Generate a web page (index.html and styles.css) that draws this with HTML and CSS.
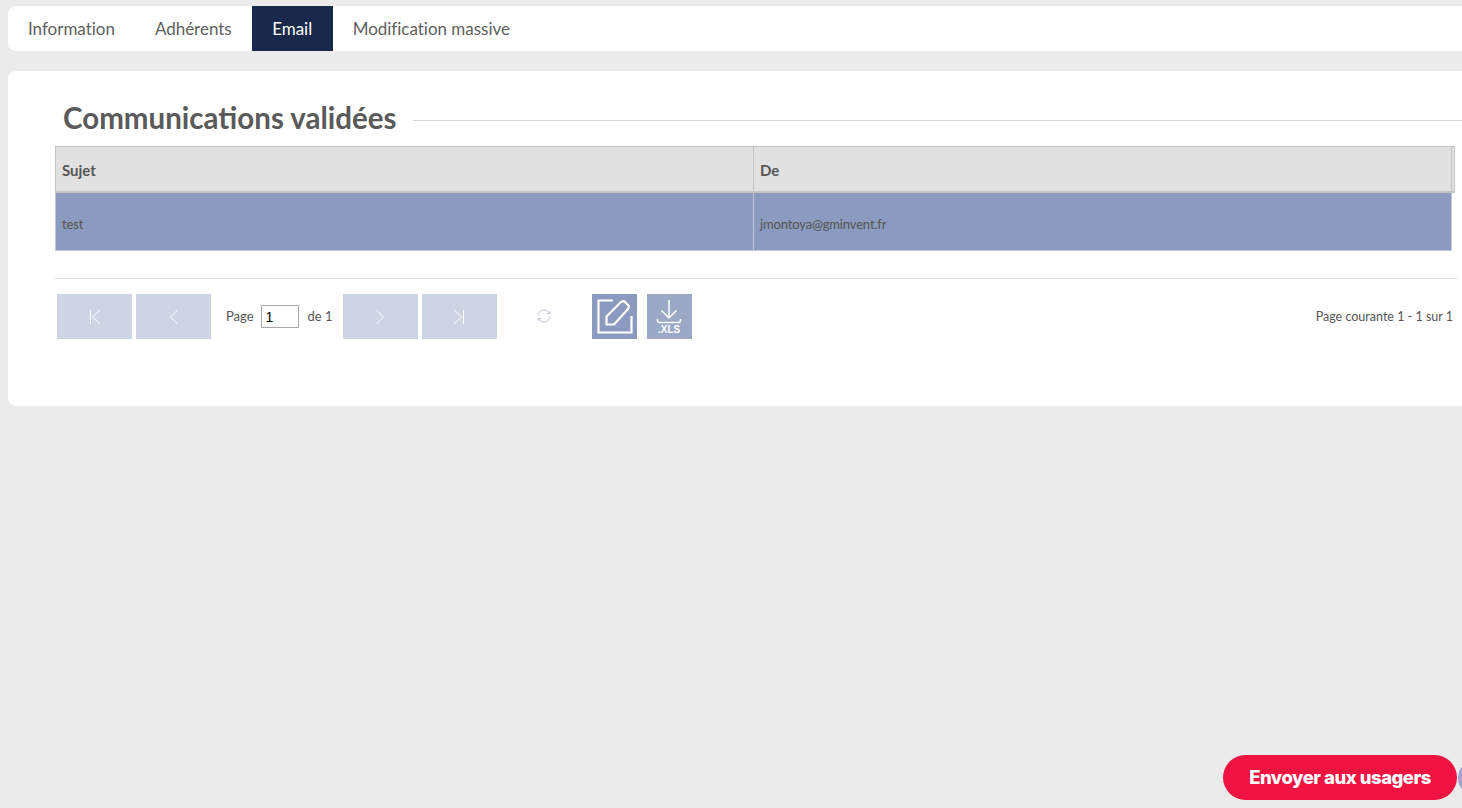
FILE: index.html
```html
<!DOCTYPE html>
<html lang="fr">
<head>
<meta charset="utf-8">
<title>Communications validées</title>
<link rel="stylesheet" href="styles.css">
</head>
<body>
<nav class="tabs">
  <a class="tab">Information</a>
  <a class="tab">Adhérents</a>
  <a class="tab active">Email</a>
  <a class="tab">Modification massive</a>
</nav>
<main class="panel">
  <div class="title-row">
    <h2 class="title">Communications validées</h2>
    <div class="title-line"></div>
  </div>
  <div class="grid">
    <div class="grid-head">
      <div class="head-cell first">Sujet</div>
      <div class="head-cell second">De</div>
    </div>
    <div class="grid-row">
      <div class="cell first">test</div>
      <div class="cell second">jmontoya@gminvent.fr</div>
    </div>
  </div>
  <div class="sep"></div>
  <div class="pager">
    <button class="pbtn"><svg width="14" height="16" viewBox="0 0 14 16"><path d="M2.500 1v14M12 1L4.500 8l7.500 7" fill="none" stroke="#fff" stroke-width="1"/></svg></button>
    <button class="pbtn"><svg width="12" height="16" viewBox="0 0 12 16"><path d="M9.500 1L2.500 8l7 7" fill="none" stroke="#fff" stroke-width="1"/></svg></button>
    <span class="page-label">Page</span>
    <input class="page-input" value="1">
    <span class="page-of">de 1</span>
    <button class="pbtn"><svg width="12" height="16" viewBox="0 0 12 16"><path d="M2.500 1l7 7-7 7" fill="none" stroke="#fff" stroke-width="1"/></svg></button>
    <button class="pbtn"><svg width="14" height="16" viewBox="0 0 14 16"><path d="M11.500 1v14M2 1l7.500 7L2 15" fill="none" stroke="#fff" stroke-width="1"/></svg></button>
    <span class="refresh"><svg width="16" height="16" viewBox="0 0 16 16" fill="none" stroke="#c3cadb" stroke-width="1"><path d="M2 7a6 6 0 0 1 10.500-3L14 5.500M14 2.500v3h-3M14 9a6 6 0 0 1-10.500 3L2 10.500M2 13.500v-3h3"/></svg></span>
    <button class="action edit"><svg width="37" height="37" viewBox="0 0 37 37" fill="none" stroke="#fff" stroke-width="2.200"><path d="M17 2.500H2.500v32h33V18"/><path d="M10.500 26.500v-8L25 4l3-1 5 5-1 3L18 26.500z" stroke-linejoin="round"/></svg></button>
    <button class="action xls">
      <svg width="26" height="27" viewBox="0 0 26 27" fill="none" stroke="#fff" stroke-width="1.500"><path d="M13 1v18M5.500 11.500L13 19l7.500-7.500M1.500 20v1.500q0 2 2 2h19q2 0 2-2V20"/></svg>
      <span class="xls-text">.XLS</span>
    </button>
    <span class="page-info">Page courante 1 - 1 sur 1</span>
  </div>
</main>
<div class="send-wrap">
  <button class="send">Envoyer aux usagers</button>
  <span class="bubble"></span>
</div>
</body>
</html>
```
FILE: styles.css
```css
* { box-sizing: border-box; }
html, body { height: 100%; }
body {
  margin: 0;
  padding: 6px 0 0 8px;
  background: #ebebeb;
  font-family: "Lato", "Liberation Sans", sans-serif;
  color: #555;
  overflow: hidden;
  position: relative;
}
.tabs {
  display: flex;
  height: 45px;
  background: #fff;
  border-radius: 8px 0 0 8px;
}
.tab {
  display: flex;
  align-items: center;
  padding: 0 20px 1px;
  font-size: 17px;
  letter-spacing: -0.02px;
  color: #5f5f5f;
}
.tab.active {
  width: 81px;
  justify-content: center;
  padding: 0 0 1px;
  background: #19294b;
  color: #fff;
}
.panel {
  margin-top: 20px;
  height: 335px;
  background: #fff;
  border-radius: 8px 0 0 8px;
  padding: 29px 0 0 47px;
}
.title-row {
  display: flex;
  align-items: center;
  height: 38px;
  padding-left: 8px;
}
.title {
  margin: 0 0 4px;
  font-size: 29.500px;
  font-weight: 700;
  color: #5a5a5a;
  white-space: nowrap;
}
.title-line { flex: 1; height: 1px; background: #d6d6d6; margin: 3px 0 0 16px; }
.grid { margin-top: 8px; width: 1400px; }
.grid-head {
  display: flex;
  height: 47px;
  background: #e1e1e1;
  border: 1px solid #c4c4c4;
  border-bottom: 2px solid #c4c4c4;
}
.head-cell {
  display: flex;
  align-items: center;
  padding: 1px 0 0 6px;
  font-size: 15px;
  font-weight: 700;
}
.first { width: 697px; }
.head-cell.second { width: 699px; border-left: 1px solid #c4c4c4; border-right: 1px solid #c4c4c4; }
.grid-row {
  display: flex;
  width: 1397px;
  height: 58px;
  background: #8b9abe;
  border-left: 1px solid #c4c8d4;
  border-right: 1px solid #c4c8d4;
  border-bottom: 1px solid #c4c8d4;
}
.cell {
  display: flex;
  align-items: center;
  padding: 4px 0 0 6px;
  font-size: 13px;
  letter-spacing: -0.15px;
  color: #555;
}
.cell.second { flex: 1; border-left: 1px solid #c4c8d4; padding-left: 6px; }
.sep { margin-top: 27px; width: 1402px; height: 1px; background: #dcdcdc; }
.pager {
  display: flex;
  align-items: center;
  width: 1396px;
  margin: 15px 0 0 2px;
  font-size: 13px;
}
.pbtn {
  display: flex;
  align-items: center;
  justify-content: center;
  width: 75px;
  height: 45px;
  margin-right: 4px;
  padding: 0;
  border: 0;
  background: #cdd4e4;
}
.page-label { margin: 0 0 1px 11px; }
.page-input {
  width: 38px;
  height: 23px;
  margin: 0 9px 0 7px;
  padding: 0 4px;
  border: 1px solid #a9a9a9;
  font: 14px "Liberation Sans", sans-serif;
  color: #000;
  background: #fff;
}
.page-of { margin: 0 10px 1px 0; }
.refresh { display: flex; margin: 0 40px 1px 35px; }
.action {
  display: flex;
  flex-direction: column;
  align-items: center;
  justify-content: center;
  width: 45px;
  height: 45px;
  padding: 0;
  border: 0;
}
.edit { background: #8b9abe; margin-right: 10px; }
.xls { background: #9ba8c6; }
.xls-text {
  margin-top: -1px;
  font: 700 10px "Liberation Sans", sans-serif;
  color: #fff;
  line-height: 10px;
}
.page-info { margin: 0 0 1px auto; font-size: 12.500px; }
.send-wrap {
  position: absolute;
  right: 0;
  bottom: 8px;
  display: flex;
  align-items: center;
  width: 239px;
}
.send {
  width: 234px;
  height: 45px;
  flex: none;
  padding: 0 0 2px;
  border: 0;
  border-radius: 23px;
  background: #ee1340;
  color: #fff;
  font: 800 18.500px "Inter", "Liberation Sans", sans-serif;
  letter-spacing: -0.5px;
}
.bubble {
  width: 36px;
  height: 36px;
  flex: none;
  margin-left: 1px;
  border-radius: 50%;
  background: #a1a4d0;
}
```
